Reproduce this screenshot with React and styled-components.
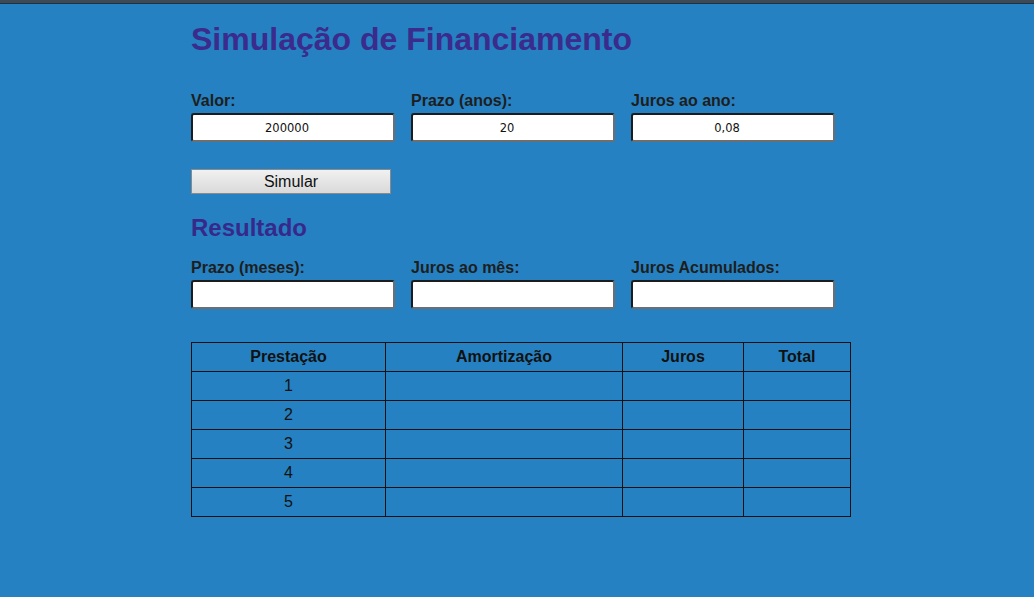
import React from "react";
import styled, { createGlobalStyle } from "styled-components";

const Global = createGlobalStyle`
  html, body { margin: 0; padding: 0; }
  body {
    background: #2581c1;
    font-family: "Liberation Sans", Arial, sans-serif;
    color: #1e1e1e;
  }
`;

const TopBar = styled.div`
  height: 3px;
  background: #3c4b57;
  border-bottom: 1px solid #1e3344;
`;

const Page = styled.main`
  padding: 0 0 0 191px;
  width: 660px;
`;

const Title = styled.h1`
  margin: 17px 0 0;
  font-size: 32px;
  line-height: 37px;
  font-weight: bold;
  color: #3a2b8c;
`;

const SubTitle = styled.h2`
  margin: 0;
  font-size: 24px;
  line-height: 28px;
  font-weight: bold;
  color: #37298b;
`;

const FieldRow = styled.div`
  display: flex;
  gap: 16px;
  margin-top: ${(p) => p.$top}px;
`;

const Field = styled.label`
  display: flex;
  flex-direction: column;
  width: 204px;
`;

const Label = styled.span`
  font-size: 16px;
  line-height: 18px;
  font-weight: bold;
  color: #1e1e1e;
  margin-bottom: 3px;
`;

const Input = styled.input`
  box-sizing: border-box;
  width: 204px;
  height: 29px;
  border: 2px solid;
  border-color: #1c1c1c #6e6e6e #6e6e6e #1c1c1c;
  border-radius: 3px;
  background: #fff;
  text-align: center;
  font-family: "DejaVu Sans", sans-serif;
  font-size: 11.5px;
  color: #111;
  padding: 0 13px 0 1px;
  outline: none;
`;

const Button = styled.button`
  box-sizing: border-box;
  display: block;
  width: 200px;
  height: 25px;
  margin-top: 27px;
  border: 1px solid #8a8a8a;
  background: linear-gradient(#f1f1f1, #d9d9d9);
  font-family: "Liberation Sans", Arial, sans-serif;
  font-size: 16px;
  color: #111;
  padding: 0;
`;

const ResultBlock = styled.section`
  margin-top: 20px;
`;

const Table = styled.table`
  margin-top: 33px;
  border-collapse: collapse;
  table-layout: fixed;
  font-size: 16px;
  color: #111;
`;

const Th = styled.th`
  border: 1px solid #111;
  height: 28px;
  padding: 0;
  font-weight: bold;
  text-align: center;
  width: ${(p) => p.$w}px;
`;

const Td = styled.td`
  border: 1px solid #111;
  height: 28px;
  padding: 0;
  text-align: center;
`;

export default function App() {
  return (
    <>
      <Global />
      <TopBar />
      <Page>
        <Title>Simulação de Financiamento</Title>
        <FieldRow $top={34}>
          <Field>
            <Label>Valor:</Label>
            <Input defaultValue="200000" />
          </Field>
          <Field>
            <Label>Prazo (anos):</Label>
            <Input defaultValue="20" />
          </Field>
          <Field>
            <Label>Juros ao ano:</Label>
            <Input defaultValue="0,08" />
          </Field>
        </FieldRow>
        <Button>Simular</Button>
        <ResultBlock>
          <SubTitle>Resultado</SubTitle>
          <FieldRow $top={17}>
            <Field>
              <Label>Prazo (meses):</Label>
              <Input />
            </Field>
            <Field>
              <Label>Juros ao mês:</Label>
              <Input />
            </Field>
            <Field>
              <Label>Juros Acumulados:</Label>
              <Input />
            </Field>
          </FieldRow>
        </ResultBlock>
        <Table>
          <thead>
            <tr>
              <Th $w={193}>Prestação</Th>
              <Th $w={236}>Amortização</Th>
              <Th $w={120}>Juros</Th>
              <Th $w={106}>Total</Th>
            </tr>
          </thead>
          <tbody>
            {[1, 2, 3, 4, 5].map((n) => (
              <tr key={n}>
                <Td>{n}</Td>
                <Td />
                <Td />
                <Td />
              </tr>
            ))}
          </tbody>
        </Table>
      </Page>
    </>
  );
}
